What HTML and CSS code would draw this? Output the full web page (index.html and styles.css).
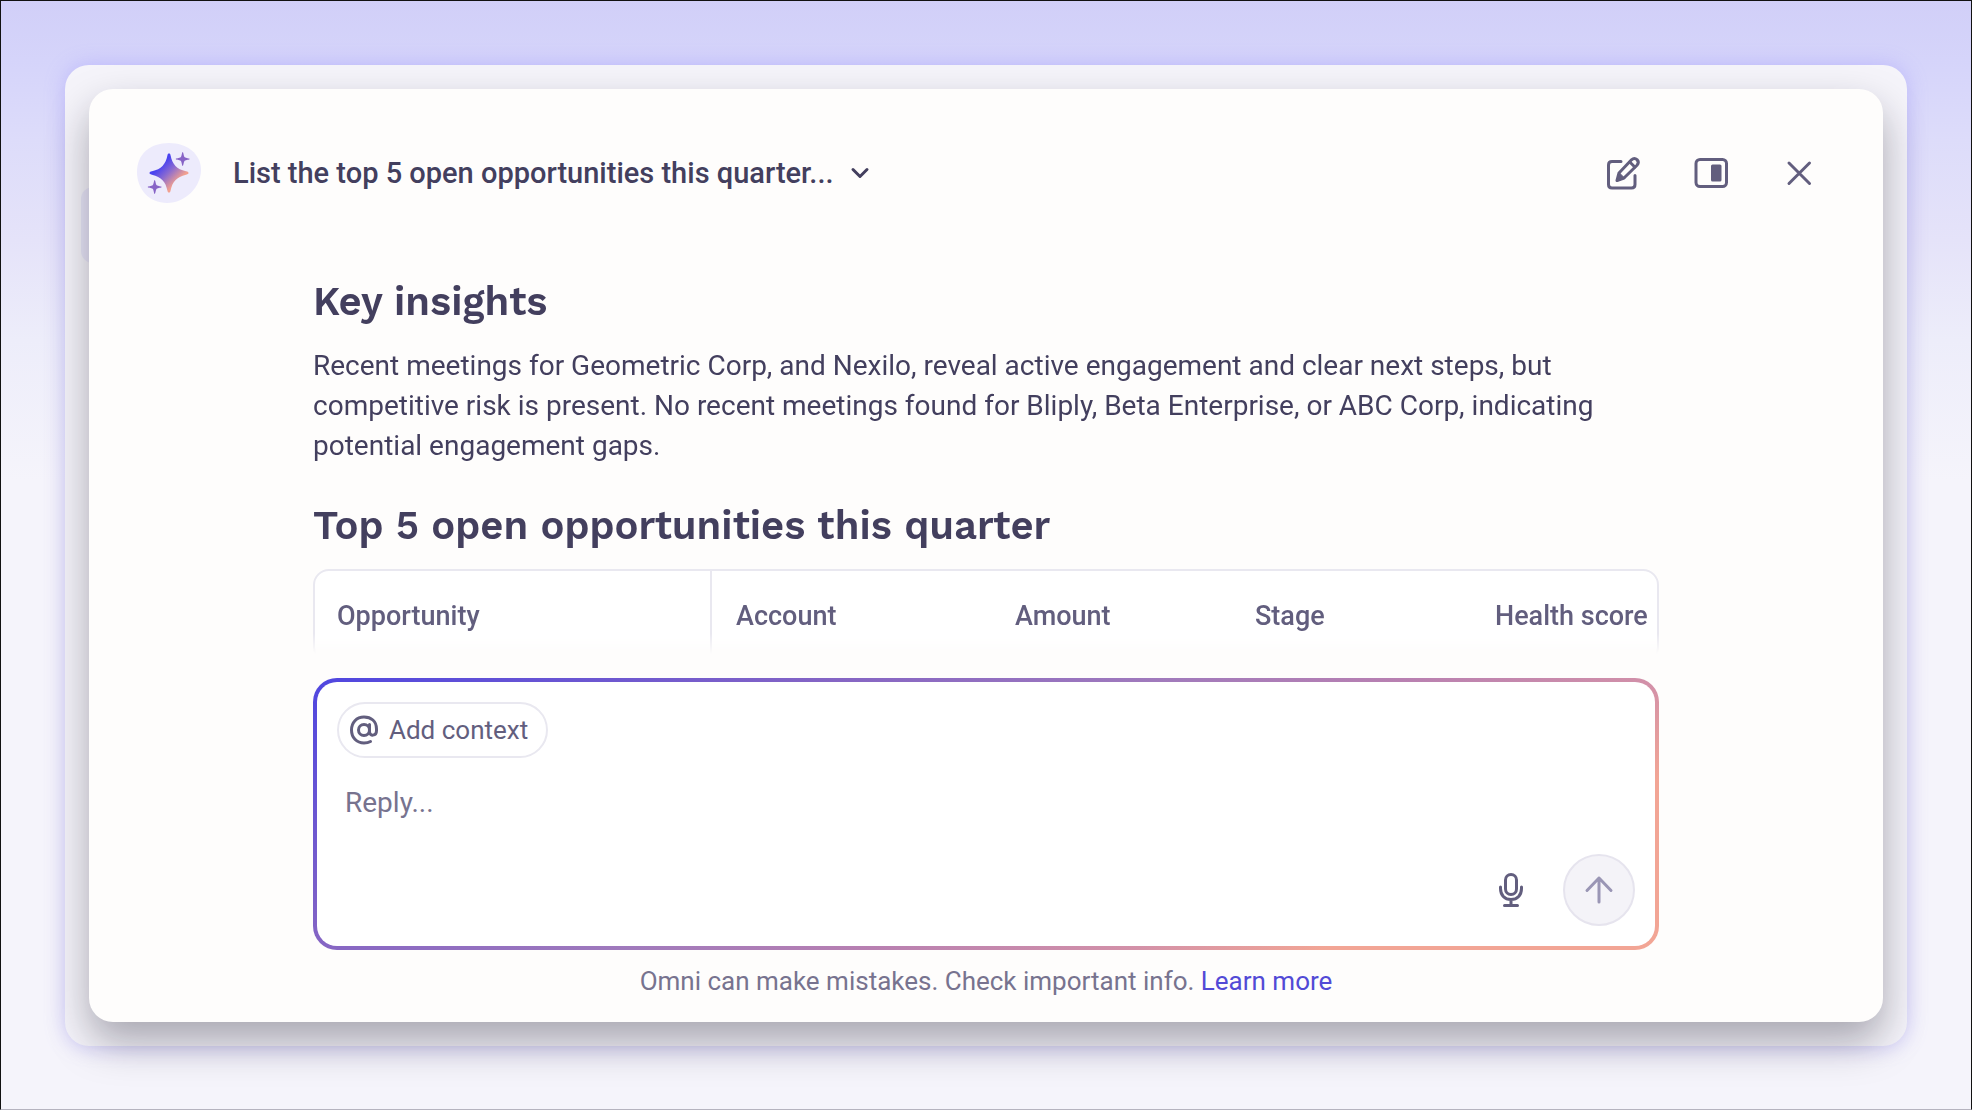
FILE: index.html
```html
<!DOCTYPE html>
<html lang="en">
<head>
    <meta charset="UTF-8">
    <meta name="viewport" content="width=device-width, initial-scale=1.0">
    <title>Omni</title>
    <link rel="stylesheet" href="styles.css">
</head>
<body>
    <div class="frame">
        <span class="side-tab"></span>
        <main class="chat">
            <header class="chat-header">
                <svg class="omni-logo" viewBox="0 0 64 60" aria-hidden="true">
                    <defs>
                        <linearGradient id="starFill" x1="0.3" y1="0.3" x2="0.72" y2="0.72">
                            <stop offset="0" stop-color="#4a43f0"/>
                            <stop offset="0.45" stop-color="#8b6bd0"/>
                            <stop offset="1" stop-color="#f2a08f"/>
                        </linearGradient>
                    </defs>
                    <path fill="#edebfc" d="M32 0C50 0 64 11 64 27C64 44 48 60 30 60C12 60 0 46 0 29C0 11 13 0 32 0Z"/>
                    <path fill="url(#starFill)" d="M32 10.500C33 10.500 33.300 11 33.600 12.500C35.500 21.500 39.500 26 49 28.300C51 28.800 51.500 29.200 51.500 30C51.500 30.800 51 31.200 49 31.700C39.500 34 35.500 38.500 33.600 47.500C33.300 49 33 49.500 32 49.500C31 49.500 30.700 49 30.400 47.500C28.500 38.500 24.500 34 15 31.700C13 31.200 12.500 30.800 12.500 30C12.500 29.200 13 28.800 15 28.300C24.500 26 28.500 21.500 30.400 12.500C30.700 11 31 10.500 32 10.500Z"/>
                    <path fill="#8763c6" d="M45.700 9C46.500 9 46.600 13.300 47.700 14.200C49 15.200 52.700 15.200 52.700 16C52.700 16.800 49 16.800 47.700 17.800C46.600 18.700 46.500 23 45.700 23C44.900 23 44.800 18.700 43.700 17.800C42.400 16.800 38.700 16.800 38.700 16C38.700 15.200 42.400 15.200 43.700 14.200C44.800 13.300 44.900 9 45.700 9Z"/>
                    <path fill="#8763c6" d="M17.700 37C18.500 37 18.600 41.300 19.700 42.200C21 43.200 24.700 43.200 24.700 44C24.700 44.800 21 44.800 19.700 45.800C18.600 46.700 18.500 51 17.700 51C16.900 51 16.800 46.700 15.700 45.800C14.400 44.800 10.700 44.800 10.700 44C10.700 43.200 14.400 43.200 15.700 42.200C16.800 41.300 16.900 37 17.700 37Z"/>
                </svg>
                <button type="button" class="thread-btn">
                    <span>List the top 5 open opportunities this quarter...</span>
                    <svg class="chevron" viewBox="0 0 20 20" aria-hidden="true"><path d="M3 6.500L10 13.500L17 6.500"/></svg>
                </button>
                <div class="header-actions">
                    <button type="button" class="icon-btn" aria-label="New chat">
                        <svg viewBox="0 0 40 40" aria-hidden="true">
                            <path d="M18 8.500H9Q5.500 8.500 5.500 12V31.500Q5.500 35 9 35H28.500Q32 35 32 31.500V22.500"/>
                            <path d="M14 27.500L16 20L28.500 6.800Q31.300 4.200 34 6.600Q36.600 9.300 34 12.200L21 25Z"/>
                            <path d="M26.800 9L31.800 14"/>
                            <path class="solid" d="M13.500 28L16 19.500L21.500 25Z"/>
                        </svg>
                    </button>
                    <button type="button" class="icon-btn" aria-label="Dock to side">
                        <svg viewBox="0 0 40 40" aria-hidden="true">
                            <rect x="5" y="6.500" width="30.500" height="27" rx="4"/>
                            <rect class="fill" x="20" y="11.500" width="10.500" height="17" rx="1.500"/>
                        </svg>
                    </button>
                    <button type="button" class="icon-btn" aria-label="Close">
                        <svg viewBox="0 0 40 40" aria-hidden="true"><path d="M10 10L30.500 30.500M30.500 10L10 30.500"/></svg>
                    </button>
                </div>
            </header>

            <section class="messages">
                <h2>Key insights</h2>
                <p>Recent meetings for Geometric Corp, and Nexilo, reveal active engagement and clear next steps, but competitive risk is present. No recent meetings found for Bliply, Beta Enterprise, or ABC Corp, indicating potential engagement gaps.</p>
                <h2>Top 5 open opportunities this quarter</h2>
                <div class="table-wrap">
                    <table class="opps">
                        <thead>
                            <tr>
                                <th class="col-opportunity" scope="col">Opportunity</th>
                                <th class="col-account" scope="col">Account</th>
                                <th class="col-amount" scope="col">Amount</th>
                                <th class="col-stage" scope="col">Stage</th>
                                <th scope="col">Health score</th>
                            </tr>
                        </thead>
                    </table>
                </div>
            </section>

            <form class="composer">
                <button type="button" class="context-btn">
                    <svg viewBox="0 0 30 30" aria-hidden="true">
                        <circle cx="15" cy="15" r="5.500"/>
                        <path d="M20.500 9.500V16.500C20.500 21.500 27.500 21.500 27.500 15.500V14C27.500 6 22 2 15 2C7.500 2 2.500 7.500 2.500 15C2.500 22.500 7.500 28 15 28C17.500 28 19.700 27.500 21.500 26.500"/>
                    </svg>
                    Add context
                </button>
                <textarea class="reply" rows="1" placeholder="Reply..." aria-label="Reply"></textarea>
                <div class="composer-actions">
                    <button type="button" class="icon-btn" aria-label="Dictate">
                        <svg viewBox="0 0 40 40" aria-hidden="true">
                            <rect x="14.500" y="4.500" width="11" height="20" rx="5.500"/>
                            <path d="M9.500 17V18.500C9.500 25 13.500 29.500 20 29.500C26.500 29.500 30.500 25 30.500 18.500V17M20 29.500V35.500M13.500 35.500H26.500"/>
                        </svg>
                    </button>
                    <button type="submit" class="send-btn" aria-label="Send">
                        <svg viewBox="0 0 40 40" aria-hidden="true"><path d="M20 32V8M8 20.500L20 8L32 20.500"/></svg>
                    </button>
                </div>
            </form>

            <footer class="disclaimer">Omni can make mistakes. Check important info. <a href="#">Learn more</a></footer>
        </main>
    </div>
</body>
</html>
```
FILE: styles.css
```css
* { box-sizing: border-box; }

body {
    margin: 0;
    height: 100vh;
    padding: 64px 64px 63px;
    display: flex;
    border: 1px solid #111;
    border-bottom-color: #b5b3bf;
    background: linear-gradient(#d1cff8 0, #d5d4fa 60px, #dddcfa 140px, #e5e3f9 240px, #ededfa 340px, #f5f4fb 480px);
    font-family: Roboto, "Liberation Sans", sans-serif;
    color: #433f5e;
}

button, textarea { font-family: inherit; color: inherit; background: none; border: none; padding: 0; margin: 0; }
button { cursor: pointer; }
svg { display: block; fill: none; stroke-linecap: round; stroke-linejoin: round; }

.frame {
    position: relative;
    flex: 1;
    min-width: 0;
    display: flex;
    padding: 24px;
    border-radius: 24px;
    background: #f5f4fa;
    box-shadow: 0 0 20px rgba(150, 140, 255, 0.4);
}

/* sliver of the collapsed sidebar item behind the chat card */
.side-tab { position: absolute; left: 16px; top: 122px; width: 40px; height: 76px; border-radius: 12px; background: #e9e7f8; }

.chat {
    position: relative;
    flex: 1;
    min-width: 0;
    display: flex;
    flex-direction: column;
    border-radius: 24px;
    background: #fefdfc;
    box-shadow: 0 20px 40px rgba(20, 18, 35, 0.34);
}

.chat-header { display: flex; align-items: center; height: 168px; padding: 0 64px 0 48px; }
.omni-logo { width: 64px; height: 60px; }
.thread-btn { display: flex; align-items: center; gap: 16px; margin-left: 32px; font-size: 29px; font-weight: 500; white-space: nowrap; }
.chevron { width: 20px; height: 20px; stroke: #433f5e; stroke-width: 3; }
.header-actions { display: flex; gap: 48px; margin-left: auto; }
.icon-btn svg { width: 40px; height: 40px; stroke: #625e7e; stroke-width: 3; }
.icon-btn .fill { fill: #625e7e; stroke: none; }
.icon-btn .solid { fill: #625e7e; stroke-width: 1; }

.messages {
    flex: 1;
    min-height: 0;
    overflow: hidden;
    margin: 0 224px 24px;
    padding-top: 19px;
    -webkit-mask-image: linear-gradient(#000 calc(100% - 20px), transparent);
    mask-image: linear-gradient(#000 calc(100% - 20px), transparent);
}
.messages h2 { margin: 0; font-family: "Work Sans", "Open Sans", sans-serif; font-size: 40px; line-height: 52px; font-weight: 600; }
.messages p { margin: 18px 0 34px; font-size: 28px; line-height: 40px; }

.table-wrap { margin-top: 17px; border: 2px solid #e9e8f0; border-radius: 16px; background: #fff; }
.opps { width: 100%; table-layout: fixed; border-collapse: collapse; }
.opps th { height: 90px; padding: 0 0 0 24px; text-align: left; white-space: nowrap; font-size: 27px; font-weight: 500; color: #625e7e; }
.opps .col-opportunity { width: 396px; padding-left: 22px; border-right: 2px solid #e9e8f0; }
.opps .col-account { width: 280px; }
.opps .col-amount, .opps .col-stage { width: 240px; }

.composer {
    display: flex;
    flex-direction: column;
    height: 272px;
    margin: 0 224px;
    padding: 20px;
    border: 4px solid transparent;
    border-radius: 24px;
    background: linear-gradient(#fff, #fff) padding-box, linear-gradient(153deg, #4f46e0 0%, #8565c4 28%, #a07abc 45%, #b880b1 58%, #d391a8 72%, #f2a595 82%) border-box;
}
.context-btn {
    display: flex;
    align-items: center;
    gap: 10px;
    align-self: flex-start;
    height: 56px;
    padding: 0 18px 0 10px;
    border: 2px solid #e9e8f0;
    border-radius: 28px;
    font-size: 26px;
    color: #625e7e;
}
.context-btn svg { width: 30px; height: 30px; stroke: #625e7e; stroke-width: 3; }
.reply { display: block; margin: 25px 8px 0; height: 40px; font-size: 28px; line-height: 40px; resize: none; outline: none; overflow: hidden; }
.reply::placeholder { color: #77738f; opacity: 1; }
.composer-actions { display: flex; justify-content: flex-end; align-items: center; gap: 32px; margin-top: auto; }
.send-btn { display: flex; align-items: center; justify-content: center; width: 72px; height: 72px; border: 2px solid #e6e4ee; border-radius: 50%; background: #f4f3f8; }
.send-btn svg { width: 40px; height: 40px; stroke: #9a96b5; stroke-width: 3; }

.disclaimer { padding: 15px 24px 25px; text-align: center; font-size: 26px; line-height: 32px; color: #77738f; }
.disclaimer a { color: #524ad6; text-decoration: none; }
```
